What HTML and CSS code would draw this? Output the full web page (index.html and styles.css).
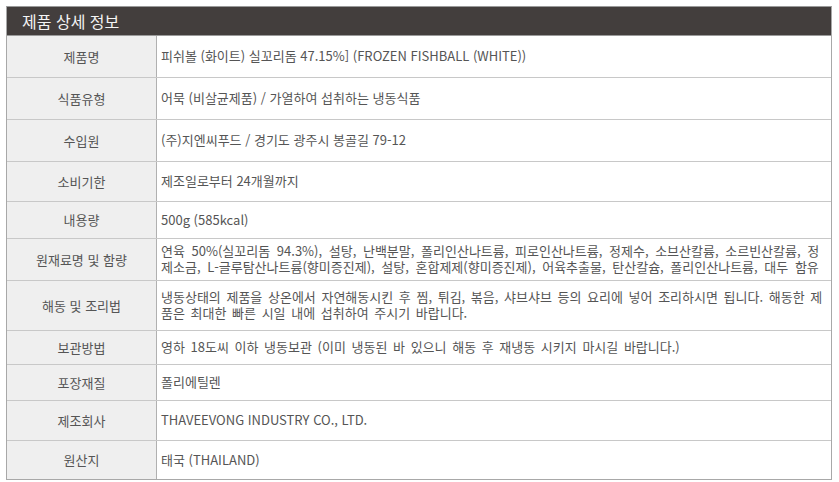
FILE: index.html
```html
<!DOCTYPE html>
<html lang="ko">
<head>
<meta charset="utf-8">
<link rel="stylesheet" href="styles.css">
</head>
<body>
<div class="info">
  <div class="title">제품 상세 정보</div>
  <div class="row h42"><div class="label">제품명</div><div class="value">피쉬볼 (화이트) 실꼬리돔 47.15%] (FROZEN FISHBALL (WHITE))</div></div>
  <div class="row h42"><div class="label">식품유형</div><div class="value">어묵 (비살균제품) / 가열하여 섭취하는 냉동식품</div></div>
  <div class="row h42"><div class="label">수입원</div><div class="value">(주)지엔씨푸드 / 경기도 광주시 봉골길 79-12</div></div>
  <div class="row h40"><div class="label">소비기한</div><div class="value">제조일로부터 24개월까지</div></div>
  <div class="row h37"><div class="label">내용량</div><div class="value">500g (585kcal)</div></div>
  <div class="row h42"><div class="label">원재료명 및 함량</div><div class="value wide wider">연육 50%(실꼬리돔 94.3%), 설탕, 난백분말, 폴리인산나트륨, 피로인산나트륨, 정제수, 소브산칼륨, 소르빈산칼륨, 정제소금, L-글루탐산나트륨(향미증진제), 설탕, 혼합제제(향미증진제), 어육추출물, 탄산칼슘, 폴리인산나트륨, 대두 함유</div></div>
  <div class="row h50"><div class="label">해동 및 조리법</div><div class="value wide">냉동상태의 제품을 상온에서 자연해동시킨 후 찜, 튀김, 볶음, 샤브샤브 등의 요리에 넣어 조리하시면 됩니다. 해동한 제품은 최대한 빠른 시일 내에 섭취하여 주시기 바랍니다.</div></div>
  <div class="row h34"><div class="label">보관방법</div><div class="value wide">영하 18도씨 이하 냉동보관 (이미 냉동된 바 있으니 해동 후 재냉동 시키지 마시길 바랍니다.)</div></div>
  <div class="row h36"><div class="label">포장재질</div><div class="value">폴리에틸렌</div></div>
  <div class="row h40"><div class="label">제조회사</div><div class="value">THAVEEVONG INDUSTRY CO., LTD.</div></div>
  <div class="row h38 last"><div class="label">원산지</div><div class="value">태국 (THAILAND)</div></div>
</div>
</body>
</html>
```
FILE: styles.css
```css
html, body {
  margin: 0;
  padding: 0;
  background: #ffffff;
}
body {
  padding: 6px 7px 0 6px;
  font-family: "Noto Sans CJK KR", "Noto Sans", sans-serif;
  color: #555555;
}
.info {
  width: 826px;
  border: 1px solid #a8a8a8;
  border-top-color: #9a9a9a;
  box-sizing: border-box;
}
.title {
  height: 28px;
  background: #433e3d;
  color: #f4f4f4;
  font-size: 16px;
  line-height: 28px;
  padding-left: 15px;
  border-bottom: 1px solid #9a9a9a;
}
.row {
  display: flex;
  border-bottom: 1px solid #c8c8c8;
  box-sizing: border-box;
  font-size: 13px;
  line-height: 16px;
}
.row.last { border-bottom: none; }
.label {
  width: 150px;
  flex: none;
  background: #efefef;
  border-right: 1px solid #b0b0b0;
  box-sizing: border-box;
  display: flex;
  align-items: center;
  justify-content: center;
  color: #555;
}
.value {
  flex: 1;
  display: flex;
  align-items: center;
  padding: 0 3px 1px 4px;
  color: #555;
}
.value.wide {
  word-spacing: 2px;
  word-break: break-all;
}
.value.wider {
  word-spacing: 3px;
}
.h42 { height: 42px; }
.h40 { height: 40px; }
.h37 { height: 37px; }
.h50 { height: 50px; }
.h34 { height: 34px; }
.h36 { height: 36px; }
.h38 { height: 38px; }
```
